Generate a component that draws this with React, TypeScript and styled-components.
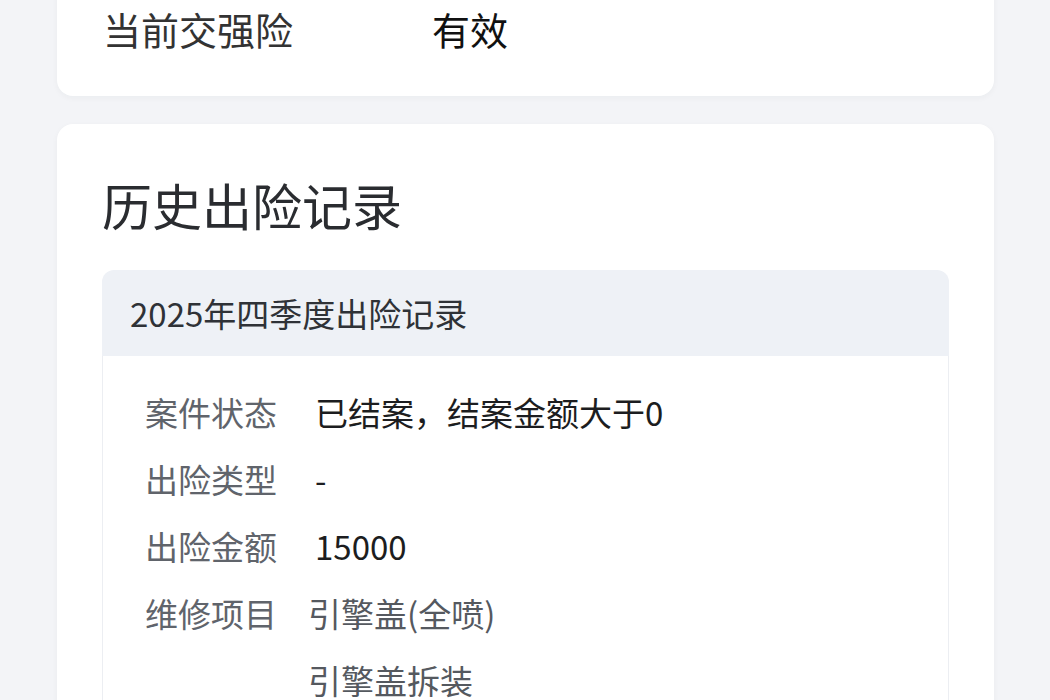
import React from 'react';
import styled, { createGlobalStyle } from 'styled-components';

const GlobalStyle = createGlobalStyle`
	html, body {
		margin: 0;
		padding: 0;
		background: #f3f4f7;
		font-family: 'Noto Sans CJK SC', 'Noto Sans', sans-serif;
	}
`;

const Page = styled.div`
	width: 1050px;
	height: 700px;
	overflow: hidden;
	padding: 0 56px 0 57px;
	box-sizing: border-box;
	display: flex;
	flex-direction: column;
	gap: 28px;
`;

const Card = styled.div<{ $clipped?: boolean }>`
	background: #ffffff;
	border-radius: 16px;
	box-shadow: 0 2px 6px rgba(30, 40, 60, 0.04);
	padding: ${(p) => (p.$clipped ? '38px 46px 42px' : '45px 45px 0')};
	margin-top: ${(p) => (p.$clipped ? '-34px' : '0')};
`;

const InfoRow = styled.div`
	display: grid;
	grid-template-columns: 329px 1fr;
	height: 50px;
	align-items: center;
	font-size: 38px;
	line-height: 50px;
`;

const InfoLabel = styled.span`
	color: #333333;
`;

const InfoValue = styled.span`
	color: #111111;
`;

const Title = styled.h2`
	margin: 0 0 31px;
	font-size: 50px;
	line-height: 70px;
	font-weight: 400;
	color: #2a2c30;
`;

const Record = styled.div`
	border-radius: 12px 12px 0 0;
	overflow: hidden;
`;

const RecordHeader = styled.div`
	height: 86px;
	background: #eef1f6;
	display: flex;
	align-items: center;
	padding: 0 28px;
	font-size: 33px;
	color: #2f3237;
`;

const RecordBody = styled.div`
	border: 1px solid #eceef2;
	border-top: none;
	padding: 23px 42px 40px;
`;

const Field = styled.div`
	display: grid;
	grid-template-columns: 170px 1fr;
	font-size: 33px;
	line-height: 67px;
`;

const FieldLabel = styled.span`
	color: #60646b;
`;

const FieldValues = styled.div`
	display: flex;
	flex-direction: column;
	color: #1c1d20;
`;

const RepairValue = styled.span`
	color: #55595f;
	margin-left: -7px;
`;

const fields: { label: string; values: string[]; repair?: boolean }[] = [
	{ label: '案件状态', values: ['已结案，结案金额大于0'] },
	{ label: '出险类型', values: ['-'] },
	{ label: '出险金额', values: ['15000'] },
	{ label: '维修项目', values: ['引擎盖(全喷)', '引擎盖拆装'], repair: true },
];

export default function App() {
	return (
		<>
			<GlobalStyle />
			<Page>
				<Card $clipped>
					<InfoRow>
						<InfoLabel>当前交强险</InfoLabel>
						<InfoValue>有效</InfoValue>
					</InfoRow>
				</Card>
				<Card>
					<Title>历史出险记录</Title>
					<Record>
						<RecordHeader>2025年四季度出险记录</RecordHeader>
						<RecordBody>
							{fields.map((f) => (
								<Field key={f.label}>
									<FieldLabel>{f.label}</FieldLabel>
									<FieldValues>
										{f.values.map((v) =>
											f.repair ? (
												<RepairValue key={v}>{v}</RepairValue>
											) : (
												<span key={v}>{v}</span>
											),
										)}
									</FieldValues>
								</Field>
							))}
						</RecordBody>
					</Record>
				</Card>
			</Page>
		</>
	);
}
